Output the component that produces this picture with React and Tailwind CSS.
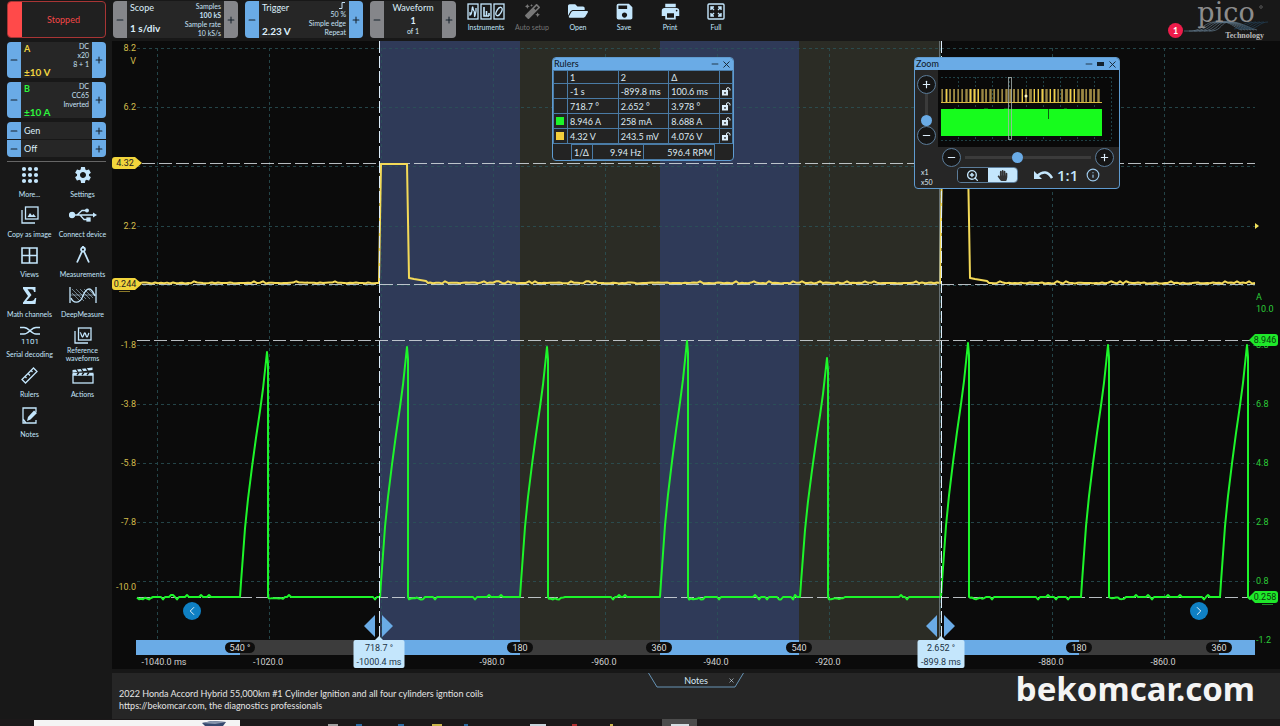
import { useState } from 'react';
import { FaFolderOpen, FaMagic, FaHandPaper } from 'react-icons/fa';
import { MdSave, MdPrint, MdSettings } from 'react-icons/md';
import { Minus, Plus, X, ChevronLeft, ChevronRight, ZoomIn, Info } from 'lucide-react';

const gridX = [157, 269, 381, 493, 605, 717, 829, 940, 1052, 1164];
const gridY = [48, 107, 166, 226, 285, 345, 404, 463, 522, 581];

const leftLabels = [
  ['8.2', 48], ['V', 61], ['6.2', 107], ['2.2', 226], ['-1.8', 345],
  ['-3.8', 404], ['-5.8', 463], ['-7.8', 522], ['-10.0', 587],
];
const rightLabels = [
  ['A', 297], ['10.0', 309], ['8.8', 345], ['6.8', 404], ['4.8', 463],
  ['2.8', 522], ['0.8', 581], ['-1.2', 640],
];
const timeLabels = [
  ['-1040.0 ms', 164], ['-1020.0', 268], ['-980.0', 492], ['-960.0', 604],
  ['-940.0', 716], ['-920.0', 828], ['-880.0', 1051], ['-860.0', 1163],
];
const phaseBars = [
  [136, 240, '#6aabe6'], [240, 380, '#3c3c3c'], [380, 520, '#6aabe6'],
  [520, 660, '#3c3c3c'], [660, 799, '#6aabe6'], [799, 941, '#3c3c3c'],
  [941, 1079, '#6aabe6'], [1079, 1219, '#3c3c3c'], [1219, 1255, '#6aabe6'],
];
const phaseMarks = [
  ['540 °', 240], ['180', 520], ['360', 659], ['540', 799], ['180', 1079], ['360', 1219],
];
const spikes = [
  [240, 352], [380, 347], [520, 347], [660, 341], [800, 358], [941, 343], [1081, 345], [1220, 345],
];

const noise = (n) => {
  const v = Math.sin(n * 12.9898) * 43758.5453;
  return v - Math.floor(v);
};

function buildVoltage() {
  const points = [];
  const flat = (from, to) => {
    for (let x = from; x <= to; x += 3) {
      const n = noise(x);
      points.push([x, 283.5 - (n > 0.9 ? 2.2 : n * 1.2)]);
    }
  };
  const pulse = (x) => {
    points.push([x - 1, 283], [x, 220], [x + 1, 164], [x + 27, 164], [x + 28, 220], [x + 29, 278]);
    points.push([x + 34, 279], [x + 40, 280], [x + 46, 281], [x + 48, 283]);
  };
  flat(137, 378);
  pulse(380);
  flat(430, 938);
  pulse(941);
  flat(991, 1255);
  return points.map((p) => p.join(',')).join(' ');
}

function buildCurrent() {
  const points = [];
  const flat = (from, to) => {
    for (let x = from; x < to; x += 2) {
      const n = noise(x + 7);
      let y = 597;
      if (x - from < 16) y = 597.5 + n * 2;
      else if (n > 0.95) y = 595;
      else if (n < 0.05) y = 599.5;
      points.push([x, y]);
    }
  };
  let start = 137;
  spikes.forEach(([x, top]) => {
    flat(start, x - 2);
    const h = 597 - top;
    [[0, 0], [1, 0.06], [3, 0.17], [5, 0.28], [8, 0.4], [12, 0.53], [16, 0.65], [20, 0.76], [23, 0.85], [27, 1]].forEach(
      ([dx, f]) => points.push([x + dx, 597 - h * f])
    );
    points.push([x + 28, top + 12], [x + 28, 597]);
    start = x + 29;
  });
  points.push([1250, 599], [1253, 597]);
  return points.map((p) => p.join(',')).join(' ');
}

const voltage = buildVoltage();
const current = buildCurrent();

function SideButton({ label, minus, className }) {
  const Icon = minus ? Minus : Plus;
  return (
    <button aria-label={label} className={`flex w-[14px] flex-shrink-0 items-center justify-center text-[#17222c] ${className}`}>
      <Icon size={10} strokeWidth={2.5} />
    </button>
  );
}

function Stepper({ name, color, className, children }) {
  return (
    <div className={`flex overflow-hidden rounded bg-[#262626] ${className}`}>
      <SideButton label={`${name} down`} minus className={color} />
      <div className="flex min-w-0 flex-1 justify-between px-[3px]">{children}</div>
      <SideButton label={`${name} up`} className={color} />
    </div>
  );
}

function ChannelBox({ name, range, lines, color }) {
  return (
    <Stepper name={`Channel ${name}`} color="bg-[#6aabe6]" className="h-9">
      <div className={`flex flex-col justify-between whitespace-nowrap ${color}`}>
        <span className="text-[9px] leading-[14px] font-bold">{name}</span>
        <span className="text-[10px] leading-3 font-bold">{range}</span>
      </div>
      <div className="-ml-3 text-right text-[7px] leading-[9px] text-[#c7e1f5]">
        {lines.map((line) => (
          <div key={line}>{line}</div>
        ))}
      </div>
    </Stepper>
  );
}

function InstrumentsIcon() {
  return (
    <svg width="38" height="17" viewBox="0 0 38 17" fill="none" stroke="#c4e6fc" strokeWidth="1.3">
      <rect x="1" y="1" width="10" height="15" />
      <rect x="14" y="1" width="10" height="15" />
      <rect x="27" y="1" width="10" height="15" />
      <path d="M3 9v3Q4.500 12 5 7T6 5t1 3 .5 4T9 8V5" />
      <path d="M17 4v9h5M19.500 13V8M22 13v-3" strokeWidth="1.6" />
      <ellipse cx="32" cy="8.5" rx="2.3" ry="4.6" transform="rotate(30 32 8.5)" />
    </svg>
  );
}

function FullIcon() {
  return (
    <svg width="18" height="17" viewBox="0 0 18 17" fill="none" stroke="#c4e6fc" strokeWidth="1.4">
      <rect x="1" y="1" width="16" height="15" rx="1" />
      <path d="M4 7V4h3M4 4l3 3M11 4h3v3M14 4l-3 3M4 10v3h3M4 13l3-3M14 10v3h-3M14 13l-3-3" />
    </svg>
  );
}

function ToolButton({ label, children, disabled }) {
  return (
    <button disabled={disabled} className={`flex w-[46px] flex-col items-center whitespace-nowrap ${disabled ? 'text-[#777]' : 'text-[#c4e6fc]'}`}>
      <span className="flex h-5 items-center">{children}</span>
      <span className="mt-[2px] text-[7px] leading-[9px]">{label}</span>
    </button>
  );
}

function Logo() {
  return (
    <svg width="102" height="41" viewBox="0 0 102 41" role="img" aria-label="pico Technology">
      <g fill="none" stroke="#7291a8" strokeWidth="0.7" opacity="0.8">
        {[0, 1, 2, 3, 4, 5].map((i) => (
          <path key={i} d={`M${6 + i * 5} 30H${14 + i * 4}C${24 + i * 4} 29 ${28 + i * 3} 21 ${36 + i * 3} 21H${46 + i * 2}C${54 + i * 2} 22 ${58 + i * 3} 28 ${64 + i * 3} 29`} />
        ))}
        {[0, 1, 2, 3, 4].map((i) => (
          <path key={i} d={`M${56 + i * 4} 28C${64 + i * 4} 27 ${66 + i * 4} 21 ${74 + i * 4} 21`} stroke="#274e6b" />
        ))}
      </g>
      <text x="48" y="21" textAnchor="middle" fontSize="27" fontFamily="DejaVu Serif, serif" fill="#8c8c8c">pico</text>
      <circle cx="83" cy="6" r="1.300" fill="none" stroke="#8c8c8c" strokeWidth="0.500" />
      <text x="86" y="37" textAnchor="end" fontSize="8" fontWeight="bold" fontFamily="Liberation Serif, serif" fill="#b9b9b9">Technology</text>
    </svg>
  );
}

function Header() {
  return (
    <header className="flex h-[41px] items-start gap-[7px] bg-[#181818] pt-px pl-[7px]">
      <button className="flex h-[37px] w-[99px] overflow-hidden rounded border border-[#a83535] bg-[#202020] text-[9px] text-[#f04747]">
        <span className="h-full w-[14px] bg-[#ff4a4a]" />
        <span className="flex h-full flex-1 items-center justify-center">Stopped</span>
      </button>
      <Stepper name="Scope" color="bg-[#85868a]" className="h-[37px] w-[125px]">
        <div className="flex flex-col justify-between whitespace-nowrap text-[#dceefa]">
          <span className="text-[9px] leading-[14px]">Scope</span>
          <span className="pb-[3px] text-[10px] leading-[14px] font-bold">1 s/div</span>
        </div>
        <div className="pt-px text-right text-[7px] leading-[9px] text-[#c7e1f5]">
          <div>Samples</div>
          <div className="font-bold">100 kS</div>
          <div>Sample rate</div>
          <div>10 kS/s</div>
        </div>
      </Stepper>
      <Stepper name="Trigger" color="bg-[#6aabe6]" className="h-[37px] w-[118px]">
        <div className="flex flex-col justify-between whitespace-nowrap text-[#dceefa]">
          <span className="text-[9px] leading-[14px]">Trigger</span>
          <span className="text-[10px] leading-[14px] font-bold">2.23 V</span>
        </div>
        <div className="flex flex-col items-end text-right text-[7px] leading-[9px] whitespace-nowrap text-[#c7e1f5]">
          <svg width="7" height="9" viewBox="0 0 7 9" fill="none" stroke="#c7e1f5">
            <path d="M0 7.500H3V1.500H6" />
          </svg>
          <div>50 %</div>
          <div>Simple edge</div>
          <div>Repeat</div>
        </div>
      </Stepper>
      <Stepper name="Waveform" color="bg-[#85868a]" className="h-[37px] w-[86px]">
        <div className="flex flex-1 flex-col items-center text-[#dceefa]">
          <span className="text-[9px] leading-[14px]">Waveform</span>
          <span className="text-[9px] leading-3 font-bold">1</span>
          <span className="text-[7px] leading-[9px]">of 1</span>
        </div>
      </Stepper>
      <nav className="flex">
        <ToolButton label="Instruments"><InstrumentsIcon /></ToolButton>
        <ToolButton label="Auto setup" disabled><FaMagic size={15} /></ToolButton>
        <ToolButton label="Open"><FaFolderOpen size={20} /></ToolButton>
        <ToolButton label="Save"><MdSave size={21} /></ToolButton>
        <ToolButton label="Print"><MdPrint size={21} /></ToolButton>
        <ToolButton label="Full"><FullIcon /></ToolButton>
      </nav>
      <div className="ml-auto flex items-start">
        <span className="-mr-[5px] mt-[22px] flex size-[15px] items-center justify-center rounded-full bg-[#ee1c4a] text-[9px] font-bold text-white">1</span>
        <Logo />
      </div>
    </header>
  );
}

const iconBase = { fill: 'none', stroke: '#c4e6fc', strokeWidth: 1.3 };

const sideItems = [
  ['More...', (
    <svg key="i" width="18" height="18" viewBox="0 0 18 18" fill="#c4e6fc">
      {[3, 9, 15].map((y) => [3, 9, 15].map((x) => <circle key={`${x}${y}`} cx={x} cy={y} r="2.100" />))}
    </svg>
  )],
  ['Settings', <MdSettings key="i" size={20} />],
  ['Copy as image', (
    <svg key="i" width="18" height="18" viewBox="0 0 18 18" {...iconBase}>
      <rect x="4.500" y="1" width="12.500" height="12" />
      <path d="M1 4v13h13" />
      <path d="M6.500 11l2.500-4 2 2.500 1.500-1.500 2.500 3z" fill="#c4e6fc" stroke="none" />
    </svg>
  )],
  ['Connect device', (
    <svg key="i" width="28" height="14" viewBox="0 0 28 14" {...iconBase}>
      <path d="M3 7h22M8 7l5-4.500h4M11 7l4 4.500h4" />
      <circle cx="3" cy="7" r="2.500" fill="#c4e6fc" />
      <circle cx="18" cy="2.500" r="1.300" fill="#c4e6fc" />
      <rect x="18" y="10" width="3" height="3" fill="#c4e6fc" />
      <path d="M24 4.500l4 2.500-4 2.500z" fill="#c4e6fc" stroke="none" />
    </svg>
  )],
  ['Views', (
    <svg key="i" width="17" height="17" viewBox="0 0 17 17" {...iconBase} strokeWidth="1.6">
      <path d="M1 1h15v15H1zM8.500 1v15M1 8.500h15" />
    </svg>
  )],
  ['Measurements', (
    <svg key="i" width="16" height="18" viewBox="0 0 16 18" {...iconBase} strokeWidth="1.8">
      <circle cx="8" cy="3.500" r="2" />
      <path d="M7 5.500L2 16.500M9 5.500l5 11M8 0v2" />
    </svg>
  )],
  ['Math channels', (
    <svg key="i" width="15" height="17" viewBox="0 0 15 17" fill="#c4e6fc">
      <path d="M1 0h12.500v5H12c-.3-2-1-2.700-3-2.700H5.500L9.500 8l-5 6H9c2.500 0 3.300-1 4-3h1.300L13.500 17H1v-1.500L6 9 1 1.700z" />
    </svg>
  )],
  ['DeepMeasure', (
    <svg key="i" width="28" height="18" viewBox="0 0 28 18" {...iconBase}>
      <path d="M1 1v16M27 1v16" />
      <path d="M1 9h26M3 3l12 12M7 3l10 10M11 3l10 10M15 3l9 9M3 7l8 8M19 3l6 6" strokeWidth="0.5" />
      <path d="M2 12c2 5 8 6 11 0 2-4 3-9 7-9 3 0 4 3 6 7" />
    </svg>
  )],
  ['Serial decoding', (
    <svg key="i" width="22" height="18" viewBox="0 0 22 18" {...iconBase} strokeWidth="1.500">
      <path d="M1 1.500h4C10 1.500 12 8 17 8h4M1 8h4c5 0 7-6.500 12-6.500h4" />
      <text x="11" y="17.500" textAnchor="middle" fontSize="8" fontFamily="Roboto, sans-serif" fill="#c4e6fc" stroke="none">1101</text>
    </svg>
  )],
  ['Reference waveforms', (
    <svg key="i" width="18" height="17" viewBox="0 0 18 17" {...iconBase}>
      <rect x="4.500" y="1" width="12.500" height="12" />
      <path d="M1 4v12h13M6 6c1-1 1.500 4 2.500 4s1.300-4 2.300-4 1.200 4 2.200 4 1-3 2-4" />
    </svg>
  )],
  ['Rulers', (
    <svg key="i" width="17" height="17" viewBox="0 0 17 17" {...iconBase}>
      <path d="M1 12.500L12.500 1 16 4.500 4.500 16zM4 9.500l1.500 1.500M7 6.500L9 8.500M10 3.500l1.500 1.500" />
    </svg>
  )],
  ['Actions', (
    <svg key="i" width="22" height="17" viewBox="0 0 22 17" {...iconBase}>
      <rect x="1" y="8" width="20" height="8" />
      <path d="M.5 3L20.500.5v2.500L.5 5.500zM.5 5.800h21v2.500H.5z" fill="#c4e6fc" stroke="none" />
      <path d="M4 2l2 3M9 1.500l2 3M14 1l2 3M5 8l2-2.500M10 8l2-2.500M15 8l2-2.500" stroke="#181818" />
    </svg>
  )],
  ['Notes', (
    <svg key="i" width="16" height="17" viewBox="0 0 16 17" {...iconBase}>
      <path d="M14 5V1H1v15h13v-3M1 12l3 4" />
      <path d="M5 14l1-4 6-6.500 3 2.500-6.500 6.500z" fill="#c4e6fc" stroke="none" />
    </svg>
  )],
];

function Sidebar() {
  return (
    <aside className="w-[112px] flex-shrink-0 bg-[#181818] pt-px">
      <div className="ml-[7px] flex w-[99px] flex-col gap-1">
        <ChannelBox name="A" range="±10 V" lines={['DC', 'x20', '8 + 1']} color="text-[#efd23f]" />
        <ChannelBox name="B" range="±10 A" lines={['DC', 'CC65', 'Inverted']} color="text-[#2df53c]" />
        <div className="flex flex-col gap-px overflow-hidden rounded text-[9px] leading-[17px] text-[#dceefa]">
          <Stepper name="Gen" color="bg-[#6aabe6]" className="rounded-none">Gen</Stepper>
          <Stepper name="Generator output" color="bg-[#6aabe6]" className="rounded-none">Off</Stepper>
        </div>
      </div>
      <hr className="mt-1 ml-[7px] w-[99px] border-t border-[#666]" />
      <nav className="mt-[3px] ml-[3px] grid w-[106px] grid-cols-2">
        {sideItems.map(([label, icon]) => (
          <button key={label} className="flex h-10 flex-col items-center text-[#c4e6fc]">
            <span className="flex h-5 items-center">{icon}</span>
            <span className={`text-[7px] leading-[8px] ${label === 'Reference waveforms' ? 'mt-px w-10' : 'mt-[5px] whitespace-nowrap'}`}>{label}</span>
          </button>
        ))}
      </nav>
    </aside>
  );
}

function LeftTag({ y, text }) {
  return (
    <g>
      <path d={`M115 ${y - 6}h20l7 6-7 6h-20q-3 0-3-3v-6q0-3 3-3z`} fill="#f2d53c" />
      <text x="125" y={y + 3} textAnchor="middle" fill="#222">{text}</text>
    </g>
  );
}

function RightTag({ y, text }) {
  return (
    <g>
      <path d={`M1249 ${y}l6-6h20q3 0 3 3v6q0 3-3 3h-20z`} fill="#1fe82a" />
      <text x="1265" y={y + 3} textAnchor="middle" fill="#0a3a0c">{text}</text>
    </g>
  );
}

function TimeFlag({ x, width, top, bottom }) {
  return (
    <g>
      <path d={`M${x - 15} 626l11-11v22zM${x + 14} 626l-11-11v22z`} fill="#6aabe6" />
      <path d={`M${x - 5} 641L${x} 636l5 5z`} fill="#c4e6fc" />
      <rect x={x - width / 2} y="640" width={width} height="28" rx="2" fill="#c4e6fc" />
      <text x={x} y="651" textAnchor="middle" fill="#1c3345">{top}</text>
      <text x={x} y="665" textAnchor="middle" fill="#1c3345">{bottom}</text>
    </g>
  );
}

function Scope() {
  return (
    <svg viewBox="112 41 1168 628" className="block h-auto w-full" fontSize="9" fontFamily="Roboto, sans-serif">
      <rect x="112" y="41" width="1168" height="628" fill="#0b0b0b" />
      <rect x="380" y="41" width="140" height="600" fill="#2f3a58" />
      <rect x="520" y="41" width="140" height="600" fill="#2b2c25" />
      <rect x="660" y="41" width="139" height="600" fill="#2f3a58" />
      <rect x="799" y="41" width="142" height="600" fill="#2b2c25" />
      <g stroke="#2b5358" strokeDasharray="3 3" opacity="0.8">
        {gridX.map((x) => <path key={x} d={`M${x + 0.5} 48V640`} />)}
        {gridY.map((y) => <path key={y} d={`M137 ${y + 0.5}H1255`} />)}
      </g>
      <path
        d="M142 163.500H1255M142 284.500H1255M137 340.500H1250M137 597.500H1250"
        stroke="#d5dbe0"
        strokeDasharray="13 4"
        opacity="0.85"
      />
      <g fill="#d3bd4c" textAnchor="end">
        {leftLabels.map(([t, y]) => <text key={t} x="136" y={y + 3}>{t}</text>)}
      </g>
      <g fill="#2ccb38">
        {rightLabels.map(([t, y]) => <text key={t} x="1256" y={y + 3}>{t}</text>)}
      </g>
      <path d="M1255 223l4 3-4 3z" fill="#f2e25c" />
      <polyline points={voltage} fill="none" stroke="#f4da58" strokeWidth="2" strokeLinejoin="round" />
      <polyline points={current} fill="none" stroke="#1df52a" strokeWidth="2" strokeLinejoin="round" />
      <path d="M379.500 41V640M941.500 41V640" stroke="#dcecfa" strokeDasharray="12 3" />
      <path d="M939.500 41V640" stroke="#8fa0a8" strokeWidth="0.600" />
      {phaseBars.map(([from, to, fill]) => (
        <rect key={from} x={from} y="640" width={to - from} height="15" fill={fill} />
      ))}
      {phaseMarks.map(([t, x]) => (
        <g key={x}>
          <rect x={x - (t.length > 3 ? 15 : 13)} y="642" width={t.length > 3 ? 30 : 26} height="11" rx="5.500" fill="#0d0d0d" />
          <text x={x} y="651" textAnchor="middle" fill="#dcdcdc">{t}</text>
        </g>
      ))}
      <g fill="#d0d0d0" textAnchor="middle">
        {timeLabels.map(([t, x]) => <text key={t} x={x} y="665">{t}</text>)}
      </g>
      <TimeFlag x={379} width={51} top="718.7 °" bottom="-1000.4 ms" />
      <TimeFlag x={941} width={47} top="2.652 °" bottom="-899.8 ms" />
      <path d="M119 291.500h11" stroke="#8a7828" />
      <path d="M1262 604.500h11" stroke="#1b8a24" />
      <LeftTag y={163} text="4.32" />
      <LeftTag y={284} text="0.244" />
      <RightTag y={340} text="8.946" />
      <RightTag y={597} text="0.258" />
    </svg>
  );
}

const rulerRows = [
  ['', '-1 s', '-899.8 ms', '100.6 ms'],
  ['', '718.7 °', '2.652 °', '3.978 °'],
  ['bg-[#1df52a]', '8.946 A', '258 mA', '8.688 A'],
  ['bg-[#f2cf3c]', '4.32 V', '243.5 mV', '4.076 V'],
];

function TitleBar({ title, children }) {
  return (
    <div className="flex h-3 items-center justify-between bg-[#6aabe6] px-px text-[#14222e]">
      <span className="text-[9px] leading-3 font-medium">{title}</span>
      <div className="flex items-center gap-px">{children}</div>
    </div>
  );
}

function LockIcon() {
  return (
    <svg width="9" height="9" viewBox="0 0 9 9">
      <rect x="0" y="3" width="6" height="5.500" fill="#dcedfa" />
      <path d="M4.500 3V2q0-1.300 1.500-1.300T8 2v1.500" fill="none" stroke="#dcedfa" />
      <rect x="2.300" y="5" width="1.400" height="1.800" fill="#232323" />
    </svg>
  );
}

function RulersPanel() {
  const cell = 'border border-[#4a7ba6] px-[2px] text-left font-normal';
  return (
    <section className="absolute top-[16px] left-[440px] w-[182px] overflow-hidden rounded-sm border border-[#5f9bd0] bg-[#232323] text-[9px] leading-[11px] text-[#dde9f2]">
      <TitleBar title="Rulers">
        <button aria-label="Minimise rulers"><Minus size={10} /></button>
        <button aria-label="Close rulers"><X size={11} /></button>
      </TitleBar>
      <table className="w-full table-fixed border-collapse whitespace-nowrap">
        <colgroup>
          <col className="w-[14px]" />
          <col />
          <col />
          <col />
          <col className="w-[13px]" />
        </colgroup>
        <thead>
          <tr className="h-[13px]">
            <td className={cell} />
            <th className={cell}>1</th>
            <th className={cell}>2</th>
            <th className={cell}>Δ</th>
            <td className={cell} />
          </tr>
        </thead>
        <tbody>
          {rulerRows.map(([swatch, one, two, delta]) => (
            <tr key={one} className="h-[15px]">
              <td className={cell}>{swatch && <span className={`block size-2 ${swatch}`} />}</td>
              <td className={cell}>{one}</td>
              <td className={cell}>{two}</td>
              <td className={cell}>{delta}</td>
              <td className={cell}>
                <button aria-label={`Lock ${one}`} className="block"><LockIcon /></button>
              </td>
            </tr>
          ))}
        </tbody>
      </table>
      <table className="mx-auto w-[144px] table-fixed border-collapse whitespace-nowrap">
        <tbody>
          <tr className="h-[15px]">
            <th className={`${cell} w-[21px]`}>1/Δ</th>
            <td className={`${cell} w-[51px]`}><div className="text-right">9.94 Hz</div></td>
            <td className={cell}><div className="text-right">596.4 RPM</div></td>
          </tr>
        </tbody>
      </table>
    </section>
  );
}

function RoundButton({ label, minus }) {
  const Icon = minus ? Minus : Plus;
  return (
    <button aria-label={label} className="flex size-[19px] flex-shrink-0 items-center justify-center rounded-full border border-[#5b7c99] bg-[#151515] text-[#dcedfa]">
      <Icon size={11} strokeWidth={2.5} />
    </button>
  );
}

function Overview() {
  const bars = [];
  for (let x = 7; x < 167; x += 4) bars.push(x);
  return (
    <svg viewBox="4 0 181 77" className="block h-auto w-full">
      <rect width="185" height="77" fill="#090909" />
      <g stroke="#2b5a60" strokeDasharray="2 2" opacity="0.7">
        <path d="M7 7.500H178M7 70.500H178" />
        {[24, 41, 58, 75, 92, 109, 126, 143, 160, 177].map((x) => <path key={x} d={`M${x}.500 7V70`} />)}
      </g>
      {bars.map((x) => (
        <g key={x}>
          <rect x={x} y="19" width={noise(x) > 0.5 ? 3 : 2} height="13" fill={noise(x + 1) > 0.5 ? '#8a793b' : '#6c5f30'} />
          <rect x={x + 1} y="19" width="1" height="13" fill={noise(x + 2) > 0.75 ? '#f0d048' : '#9c8844'} />
        </g>
      ))}
      <path d="M7 32.500H168" stroke="#d8bb42" />
      <rect x="7" y="39" width="161" height="27" fill="#17fc1d" />
      <path d="M114.500 39V49M20 38.500h2M50 38.500h4M70 38.500h5M130 38.500h3" stroke="#0b5c10" />
      <rect x="74.500" y="7.500" width="3" height="62" fill="none" stroke="#a8b2b0" strokeWidth="0.800" />
      <circle cx="92" cy="26" r="1.500" fill="#fff8c0" />
    </svg>
  );
}

function ZoomPanel() {
  const [zoomX, setZoomX] = useState(41);
  const [zoomY, setZoomY] = useState(0);
  const thumb = 'appearance-none bg-transparent [&::-webkit-slider-thumb]:size-[11px] [&::-webkit-slider-thumb]:appearance-none [&::-webkit-slider-thumb]:rounded-full [&::-webkit-slider-thumb]:bg-[#6aabe6]';
  return (
    <section className="absolute top-[16px] right-[160px] w-[206px] overflow-hidden rounded-sm border border-[#5f9bd0] bg-[#262626]">
      <TitleBar title="Zoom">
        <button aria-label="Minimise zoom"><Minus size={10} /></button>
        <button aria-label="Restore zoom" className="flex size-[11px] items-center justify-center">
          <span className="h-1 w-[7px] bg-[#14222e]" />
        </button>
        <button aria-label="Close zoom"><X size={11} /></button>
      </TitleBar>
      <div className="flex">
        <div className="flex w-[23px] flex-shrink-0 flex-col items-center pt-[5px]">
          <RoundButton label="Zoom in vertically" />
          <input
            type="range"
            aria-label="Vertical zoom"
            value={zoomY}
            onChange={(e) => setZoomY(+e.target.value)}
            className={`h-8 w-[11px] [direction:rtl] [writing-mode:vertical-lr] [&::-webkit-slider-runnable-track]:bg-[linear-gradient(90deg,transparent_4px,#3b3b3b_4px,#3b3b3b_7px,transparent_7px)] ${thumb}`}
          />
          <RoundButton label="Zoom out vertically" minus />
        </div>
        <div className="min-w-0 flex-1"><Overview /></div>
      </div>
      <div className="flex h-5 items-center gap-1 pr-[5px] pl-[27px]">
        <RoundButton label="Zoom out horizontally" minus />
        <input
          type="range"
          aria-label="Horizontal zoom"
          value={zoomX}
          onChange={(e) => setZoomX(+e.target.value)}
          className={`h-[11px] min-w-0 flex-1 [&::-webkit-slider-runnable-track]:bg-[linear-gradient(transparent_4px,#3b3b3b_4px,#3b3b3b_7px,transparent_7px)] ${thumb}`}
        />
        <RoundButton label="Zoom in horizontally" />
      </div>
      <div className="flex h-[21px] items-start pl-[6px] text-[#c4e6fc]">
        <div className="w-9 text-[7px] leading-[10px] text-[#dde9f2]">
          <div>x1</div>
          <div>x50</div>
        </div>
        <div className="flex h-4 w-[61px] overflow-hidden rounded-sm border border-[#5b7c99]">
          <button aria-label="Magnify" className="flex flex-1 items-center justify-center bg-[#1c1c1c]"><ZoomIn size={13} strokeWidth={2.5} /></button>
          <button aria-label="Pan" className="flex flex-1 items-center justify-center bg-[#c4e6fc] text-[#333]"><FaHandPaper size={11} /></button>
        </div>
        <button aria-label="Undo zoom" className="ml-4 h-4">
          <svg width="19" height="12" viewBox="0 0 19 12" fill="none" stroke="#c4e6fc" strokeWidth="2.500">
            <path d="M3 7Q12-1 18 9" />
            <path d="M0 2v8h8z" fill="#c4e6fc" stroke="none" />
          </svg>
        </button>
        <button className="ml-1 font-['Open_Sans',sans-serif] text-[15px] leading-4 font-semibold">1:1</button>
        <button aria-label="Zoom help" className="ml-2"><Info size={14} className="mt-px text-[#9cc8ea]" /></button>
      </div>
    </section>
  );
}

function NotesPanel() {
  return (
    <section className="relative mt-1 flex-1 bg-[#262626]">
      <div className="relative mx-auto h-[15px] w-24">
        <svg className="absolute inset-0" width="96" height="15" viewBox="0 0 96 15" fill="none" stroke="#6693b5">
          <path d="M.500 0L9 14H87L95.500 0" />
        </svg>
        <div className="relative flex h-[15px] items-center justify-center text-[9px] text-[#d5e8f6]">
          <label htmlFor="notes">Notes</label>
          <button aria-label="Close notes" className="absolute right-[9px]"><X size={7} /></button>
        </div>
      </div>
      <textarea
        id="notes"
        rows={2}
        spellCheck={false}
        className="block w-2/3 resize-none overflow-hidden pl-[7px] text-[9px] leading-3 text-[#e4e4e4] outline-none"
        defaultValue={'2022 Honda Accord Hybrid 55,000km #1 Cylinder Ignition and all four cylinders igntion coils\nhttps://bekomcar.com, the diagnostics professionals'}
      />
      <div className="absolute top-0 right-[25px] font-['Noto_Sans',sans-serif] text-[33px] leading-8 font-bold text-[#f4f4f4]">bekomcar.com</div>
    </section>
  );
}

function Taskbar() {
  return (
    <footer className="flex h-[7px] items-end overflow-hidden bg-[#1b1819] pl-[34px]">
      <div className="flex h-[6px] w-[206px] justify-end bg-[#f4f4f4] pr-[10px]">
        <svg width="30" height="6" viewBox="0 0 30 6">
          <path d="M2 3L12 1l14 1-3 4H5z" fill="#35486d" />
          <path d="M2 3l10-2 14 1-11 2z" fill="#8795ac" />
        </svg>
      </div>
      <svg width="422" height="2" viewBox="0 0 422 2">
        <path d="M88 1h10" stroke="#a0a0a0" strokeWidth="2" />
        <path d="M116 1h6M158 1h6M224 1h4" stroke="#2b6aa0" strokeWidth="2" />
        <path d="M192 1h10M370 1h3" stroke="#c9b54a" strokeWidth="2" />
        <path d="M290 1h16" stroke="#c8d4dc" strokeWidth="2" />
        <path d="M332 1h5" stroke="#b03030" strokeWidth="2" />
      </svg>
      <div className="flex h-[7px] w-[35px] items-end justify-center bg-[#4c4c4c]">
        <span className="h-[2px] w-[18px] bg-[#d5dde2]" />
      </div>
    </footer>
  );
}

export default function App() {
  return (
    <div className="flex min-h-screen flex-col bg-[#171717] font-[Lato,sans-serif]">
      <Header />
      <div className="flex flex-1">
        <Sidebar />
        <main className="flex min-w-0 flex-1 flex-col">
          <div className="relative">
            <Scope />
            <RulersPanel />
            <ZoomPanel />
            <button aria-label="Previous buffer" className="absolute bottom-[49px] left-[71px] flex size-[18px] items-center justify-center rounded-full bg-[#0f80c4] text-white">
              <ChevronLeft size={14} strokeWidth={1.5} />
            </button>
            <button aria-label="Next buffer" className="absolute right-[72px] bottom-[49px] flex size-[18px] items-center justify-center rounded-full bg-[#0f80c4] text-white">
              <ChevronRight size={14} strokeWidth={1.5} />
            </button>
          </div>
          <NotesPanel />
        </main>
      </div>
      <Taskbar />
    </div>
  );
}
